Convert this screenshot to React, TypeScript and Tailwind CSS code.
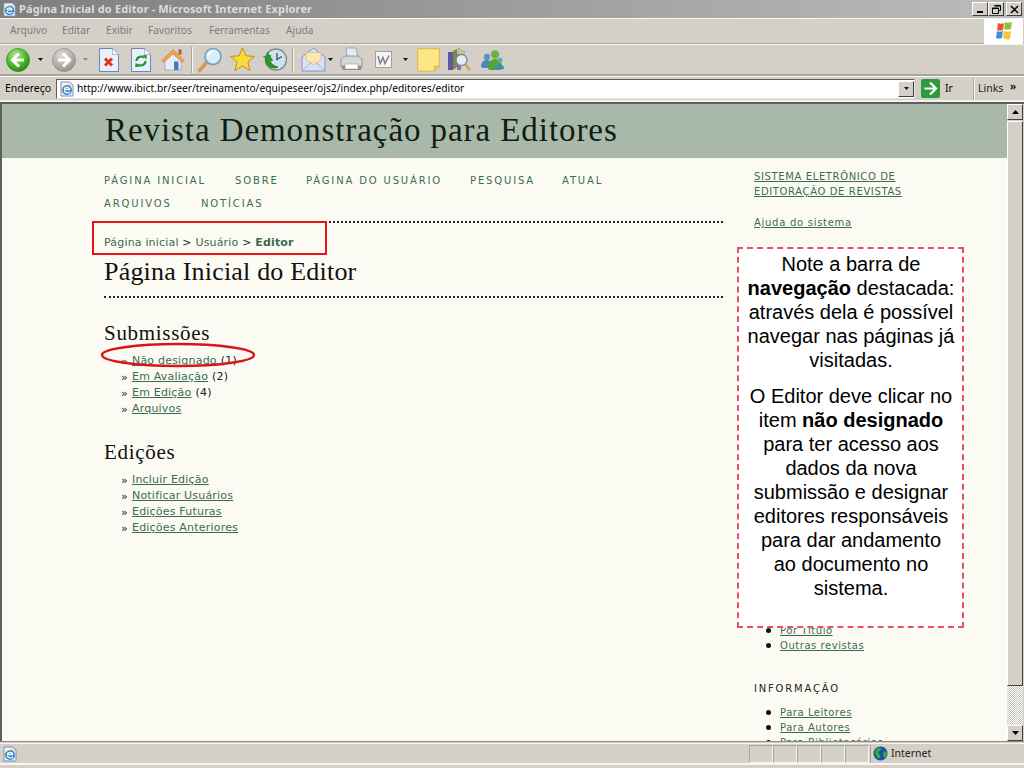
import React from "react";

const ui = "font-['Noto_Sans','Liberation_Sans',sans-serif]";
const page = "font-['DejaVu_Sans','Liberation_Sans',sans-serif]";
const serif = "font-['Liberation_Serif','DejaVu_Serif',serif]";

function Ie({ className }: { className: string }) {
  return (
    <svg viewBox="0 0 16 16" className={className}>
      <path d="M2 1h9l3 3v11H2z" fill="#eef3fb" stroke="#7d8fb5" />
      <circle cx="8" cy="9" r="5" fill="#2f86d8" />
      <path d="M5 8.5h6.2M5.2 9.6c.3 2.3 3.6 3 5.6 1.2M5.2 8.4c.3-2.4 4.7-3 5.8 0" fill="none" stroke="#fff" strokeWidth="1.3" />
      <path d="M2 12C1 6 7 3 13 4" fill="none" stroke="#f0b93c" strokeWidth=".8" />
    </svg>
  );
}

function Tri() {
  return <svg viewBox="0 0 5 3" className="w-[5px] h-[3px] shrink-0"><path d="M0 0h5L2.5 3z" fill="#111" /></svg>;
}

function Round({ grey, dir, className }: { grey?: boolean; dir: "l" | "r"; className: string }) {
  const id = grey ? "rg" : "rgn";
  return (
    <svg viewBox="0 0 24 24" className={className}>
      <defs>
        <radialGradient id={id} cx=".4" cy=".3" r=".8">
          <stop offset="0" stopColor={grey ? "#dedcd6" : "#b6ee8a"} />
          <stop offset=".55" stopColor={grey ? "#b3b1ab" : "#4cb82c"} />
          <stop offset="1" stopColor={grey ? "#8b8985" : "#1c7a14"} />
        </radialGradient>
      </defs>
      <circle cx="12" cy="12" r="11.5" fill={`url(#${id})`} stroke={grey ? "#8f8d88" : "#2a8a1e"} strokeWidth=".7" />
      <path d={dir === "l" ? "M13 5.5 6.5 12l6.5 6.5M7 12h11" : "M11 5.5l6.5 6.5-6.5 6.5M17 12H6"} fill="none" stroke="#fff" strokeWidth="3" />
    </svg>
  );
}

function Doc({ children, className }: { children: React.ReactNode; className: string }) {
  return (
    <svg viewBox="0 0 20 24" className={className}>
      <path d="M.5.5h13l6 6v17H.5z" fill="#eaf0fb" stroke="#6f86bd" />
      <path d="M13.5.5v6h6z" fill="#fff" stroke="#8da0cd" strokeWidth=".7" />
      {children}
    </svg>
  );
}

function Toolbar() {
  return (
    <div className="h-[32px] flex items-center pl-[6px] border-t border-[#f6f5f0] border-b-2 border-b-[#a8a59c]">
      <Round dir="l" className="w-[24px] h-[24px] shrink-0" />
      <div className="ml-[8px]"><Tri /></div>
      <Round grey dir="r" className="ml-[9px] w-[24px] h-[24px] shrink-0" />
      <svg viewBox="0 0 5 3" className="ml-[7px] w-[5px] h-[3px] shrink-0"><path d="M0 0h5L2.5 3z" fill="#8b8985" /></svg>
      <Doc className="ml-[11px] w-[20px] h-[24px] shrink-0">
        <path d="M6 10.5l7 7M13 10.5l-7 7" stroke="#e3321c" strokeWidth="3" />
      </Doc>
      <Doc className="ml-[12px] w-[20px] h-[24px] shrink-0">
        <path d="M5.5 13a4.5 4.5 0 0 1 7.5-3.3M14.5 13a4.5 4.5 0 0 1-7.5 3.3" fill="none" stroke="#23932a" strokeWidth="2.2" />
        <path d="M11.5 7l4.5.3-.8 4.3zM8.5 19l-4.5-.3.8-4.3z" fill="#23932a" />
      </Doc>
      <svg viewBox="0 0 24 24" className="ml-[10px] w-[24px] h-[24px] shrink-0">
        <path d="M4 11v11h16V11L12 4z" fill="#e8eef8" stroke="#8f9fbe" strokeWidth=".7" />
        <path d="M.8 12.5 12 1.5l11.2 11-2 2L12 6 2.8 14.500z" fill="#f0a64a" stroke="#c7762a" strokeWidth=".6" />
        <rect x="17.500" y="1.500" width="3" height="5" fill="#b85c3a" />
        <rect x="13" y="13.500" width="4.500" height="8.500" fill="#4f76bb" />
      </svg>
      <div className="ml-[6px] w-[2px] h-[26px] bg-[#a8a59c] border-r border-r-[#f6f5f0] shrink-0" />
      <svg viewBox="0 0 26 26" className="ml-[4px] w-[26px] h-[26px] shrink-0">
        <path d="M2.500 23.500 10 15" stroke="#d09a55" strokeWidth="3.600" strokeLinecap="round" />
        <circle cx="16" cy="9.500" r="8" fill="#d8eefa" stroke="#6f9fc4" strokeWidth="1.600" />
        <path d="M11 9c.8-3 3-4.500 6-4.500" fill="none" stroke="#fff" strokeWidth="1.600" />
      </svg>
      <svg viewBox="0 0 25 25" className="ml-[7px] w-[25px] h-[25px] shrink-0">
        <path d="M12.500.8l3.500 8 8.400.6-6.500 5.600 2.200 8.500-7.600-4.600-7.600 4.600 2.200-8.500L.6 9.400 9 8.800z" fill="#fbd93e" stroke="#c08c1c" />
      </svg>
      <svg viewBox="0 0 25 25" className="ml-[7px] w-[25px] h-[25px] shrink-0">
        <circle cx="14" cy="12.500" r="10.500" fill="#cfe3ef" stroke="#7f8f96" strokeWidth="1.400" />
        <path d="M15 6v6.500l5-3" fill="none" stroke="#3d5a6a" strokeWidth="1.400" />
        <path d="M6.500 6c-4 4-4 10 .5 13.500 3 2 6.500 2 9 .5-4-1-7-3-8-6l2.500-.5-5-8z" fill="#2c9a2a" stroke="#1d7a20" strokeWidth=".8" />
        <path d="M.5 9.500 7 13.500 9.500 8z" fill="#2c9a2a" />
      </svg>
      <div className="ml-[5px] w-[2px] h-[26px] bg-[#a8a59c] border-r border-r-[#f6f5f0] shrink-0" />
      <svg viewBox="0 0 25 25" className="ml-[7px] w-[25px] h-[25px] shrink-0">
        <path d="M1 10 12.500 1 24 10v14H1z" fill="#d7e2f6" stroke="#7f95c6" />
        <path d="M5 13V5.500h15V13l-7.500 5z" fill="#fbe6ae" stroke="#d7b878" strokeWidth=".7" />
        <path d="M1 24l9.500-9M24 24l-9.500-9" stroke="#9fb2da" strokeWidth="1" />
      </svg>
      <div className="ml-[2px]"><Tri /></div>
      <svg viewBox="0 0 23 25" className="ml-[7px] w-[23px] h-[25px] shrink-0">
        <path d="M6 1h10l2 9H7z" fill="#e3eaf5" stroke="#8e9cb4" strokeWidth=".8" />
        <path d="M1 12l4-3h13l4 3v7H1z" fill="#d8d8d8" stroke="#84847f" strokeWidth=".8" />
        <path d="M1 19h21l-1 4H3z" fill="#8d8d8a" />
        <rect x="5" y="17" width="13" height="5" fill="#fff" stroke="#9a9a95" strokeWidth=".6" />
      </svg>
      <svg viewBox="0 0 17 17" className="ml-[12px] w-[17px] h-[17px] shrink-0">
        <rect x=".5" y=".5" width="16" height="16" fill="#f5f5f0" stroke="#a1a19b" />
        <path d="M3 5l2.200 7.500L8 6.500l2 6L14 4.500" fill="none" stroke="#7a7f94" strokeWidth="1.500" />
      </svg>
      <div className="ml-[11px]"><Tri /></div>
      <svg viewBox="0 0 23 24" className="ml-[9px] w-[23px] h-[24px] shrink-0">
        <path d="M.7.7h21.600v17.500l-5 5H.7z" fill="#fce784" stroke="#e0b34c" />
        <path d="M22.300 18.200h-5v5z" fill="#f2cd58" stroke="#c99c35" strokeWidth=".6" />
      </svg>
      <svg viewBox="0 0 24 25" className="ml-[7px] w-[24px] h-[25px] shrink-0">
        <path d="M1 5h5v18H1z" fill="#5d57a8" />
        <path d="M6 4l4-2v18l-4 3z" fill="#7f8a3d" />
        <path d="M11 1l7 4-3 5-4-1z" fill="#cfc69e" stroke="#8e8a6f" strokeWidth=".5" />
        <path d="M10 7h4v16h-4z" fill="#8e6fae" />
        <circle cx="14.500" cy="13" r="5.500" fill="#e3eef0" stroke="#77909a" strokeWidth="1.400" />
        <path d="M18.500 17.500 23 23" stroke="#c9a35c" strokeWidth="2.600" />
      </svg>
      <svg viewBox="0 0 25 22" className="ml-[9px] w-[25px] h-[22px] shrink-0">
        <circle cx="7" cy="8" r="3.200" fill="#5b94c4" />
        <path d="M1 18c0-5 2.500-7 6-7 2 0 3 1 4 2l-2 6H3z" fill="#4d86b8" />
        <circle cx="15" cy="5.500" r="4.200" fill="#6eb04c" />
        <path d="M8 20c0-7 3-10 7-10s7 3 7 8c0 2-1 3-3 3H10z" fill="#57a03c" />
        <circle cx="20" cy="11" r="2.500" fill="#60a8cc" />
        <path d="M15 21c1-4 3-6 5-6s4 2 4 5z" fill="#3f8fb4" />
      </svg>
    </div>
  );
}

function WinBtn({ children }: { children: React.ReactNode }) {
  return (
    <div className="w-[16px] h-[14px] bg-[#d4d0c8] border border-t-white border-l-white border-r-[#404040] border-b-[#404040] flex items-center justify-center shrink-0">
      {children}
    </div>
  );
}

const navText = "text-[10px] leading-[23px] tracking-[1.85px] text-[#3b6b50] whitespace-nowrap shrink-0";

function Li({ label, n }: { label: string; n?: number }) {
  return (
    <li className="flex items-center h-[16px] pl-[17px] text-[11px] text-[#222]">
      <span className="w-[11px] text-[11px] leading-none">»</span>
      <a className="underline text-[#3b6b50] tracking-[.2px]">{label}</a>
      {n !== undefined && <span className="ml-[4px] tracking-[.2px]">({n})</span>}
    </li>
  );
}

function Side({ label }: { label: string }) {
  return (
    <li className="flex items-center h-[15px] pl-[12px] text-[10px]">
      <span className="w-[5px] h-[5px] rounded-full bg-[#111] mr-[9px]" />
      <a className="underline text-[#3b6b50] tracking-[.55px] whitespace-nowrap">{label}</a>
    </li>
  );
}

export default function App() {
  return (
    <div className={`relative w-[1024px] h-[768px] overflow-hidden flex flex-col bg-[#d4d0c8] ${ui}`}>
      <div className="h-[18px] shrink-0 flex items-center bg-gradient-to-r from-[#7f7f7f] to-[#bcbcbc] pl-[2px] pr-[2px]">
        <Ie className="w-[15px] h-[15px] shrink-0" />
        <span className="ml-[2px] text-[11px] font-bold tracking-[.14px] text-[#dcdcdc] whitespace-nowrap">Página Inicial do Editor - Microsoft Internet Explorer</span>
        <div className="ml-auto flex">
          <WinBtn><span className="w-[6px] h-[2px] bg-black mt-[6px]" /></WinBtn>
          <WinBtn>
            <svg viewBox="0 0 9 9" className="w-[9px] h-[9px]"><path d="M2.500.5h6v5h-2M.5 3h6v5.500h-6z" fill="none" stroke="#000" /><path d="M2.500 1h6M.5 3.500h6" stroke="#000" /></svg>
          </WinBtn>
          <div className="ml-[2px]">
            <WinBtn>
              <svg viewBox="0 0 9 9" className="w-[9px] h-[9px]"><path d="M1 1l7 7M8 1 1 8" stroke="#000" strokeWidth="1.500" /></svg>
            </WinBtn>
          </div>
        </div>
      </div>

      <div className="h-[26px] shrink-0 flex items-center text-[10.2px] text-[#7b7b7b] border-t border-[#f6f5f0] border-b border-b-[#a8a59c] relative">
        <span className="ml-[10px] w-[52px] shrink-0">Arquivo</span>
        <span className="w-[44px] shrink-0">Editar</span>
        <span className="w-[42px] shrink-0">Exibir</span>
        <span className="w-[61px] shrink-0">Favoritos</span>
        <span className="w-[77px] shrink-0">Ferramentas</span>
        <span>Ajuda</span>
        <div className="ml-auto mr-[1px] w-[39px] h-[25px] bg-white flex items-center justify-center shrink-0">
          <svg viewBox="0 0 20 20" className="w-[20px] h-[20px]">
            <path d="M4 2c2 1 4 1 6 0L9 9C7 10 5 10 3 9z" fill="#e8572c" />
            <path d="M11 1c2 1 5 1 7 0l-1 7c-2 1-5 1-7 0z" fill="#8cc43c" />
            <path d="M3 10c2 1 4 1 6 0l-1 7c-2 1-4 1-6 0z" fill="#3f8fdc" />
            <path d="M10 10c2 1 5 1 7 0l-1 8c-2 1-5 0-7-1z" fill="#f8c23a" />
          </svg>
        </div>
      </div>

      <Toolbar />

      <div className="h-[24px] shrink-0 flex items-center border-t border-[#f6f5f0] relative">
        <span className="ml-[5px] w-[51px] shrink-0 text-[10.5px] text-black">Endereço</span>
        <div className="w-[859px] h-[20px] bg-white border border-[#5c5c5c] border-b-[#e8e6e0] border-r-[#e8e6e0] flex items-center shrink-0">
          <Ie className="ml-[2px] w-[16px] h-[16px] shrink-0" />
          <span className="ml-[2px] text-[10.25px] text-black whitespace-nowrap">http://www.ibict.br/seer/treinamento/equipeseer/ojs2/index.php/editores/editor</span>
          <div className="ml-auto w-[16px] h-[16px] bg-[#d4d0c8] border border-t-white border-l-white border-r-[#404040] border-b-[#404040] flex items-center justify-center shrink-0"><Tri /></div>
        </div>
        <svg viewBox="0 0 19 19" className="ml-[6px] w-[19px] h-[19px] shrink-0">
          <rect width="19" height="19" rx="2" fill="#2f9a3c" />
          <path d="M9 3.500l6 6-6 6M14 9.500H3.500" fill="none" stroke="#fff" strokeWidth="2.200" />
        </svg>
        <span className="ml-[5px] w-[28px] shrink-0 text-[10.5px]">Ir</span>
        <div className="w-[2px] h-[22px] bg-[#a8a59c] border-r border-r-[#f6f5f0] shrink-0" />
        <span className="ml-[3px] w-[24px] text-[10.5px] text-center text-[#222]">Links</span>
        <span className="ml-[8px] text-[10px] leading-none -mt-[6px] font-bold text-[#222]">»</span>
      </div>

      <div className="flex-1 min-h-0 flex border-t-2 border-t-[#f2f1ec]">
        <div className={`relative flex-1 min-w-0 overflow-hidden bg-[#fbfbf3] border-l-2 border-t-2 border-[#5f5f5c] flex flex-col ${page}`}>
          <div className="h-[54px] shrink-0 bg-[#a9b9a9] pl-[103px] flex items-center">
            <h1 className={`${serif} text-[33px] tracking-[.93px] text-[#111c14] whitespace-nowrap`}>Revista Demonstração para Editores</h1>
          </div>
          <div className="flex pl-[102px]">
            <div className="w-[619px] shrink-0">
              <div className="pt-[11px] h-[63px]">
                <div className="flex">
                  <span className={`${navText} w-[131px]`}>PÁGINA INICIAL</span>
                  <span className={`${navText} w-[71px]`}>SOBRE</span>
                  <span className={`${navText} w-[164px]`}>PÁGINA DO USUÁRIO</span>
                  <span className={`${navText} w-[92px]`}>PESQUISA</span>
                  <span className={navText}>ATUAL</span>
                </div>
                <div className="flex">
                  <span className={`${navText} w-[97px]`}>ARQUIVOS</span>
                  <span className={navText}>NOTÍCIAS</span>
                </div>
              </div>
              <div className="border-t-2 border-dotted border-[#222]" />
              <div className="mt-[13px] text-[11px] leading-[14px] text-[#3b6b50] tracking-[.18px] whitespace-nowrap">
                Página inicial <span className="text-[#222]">&gt;</span> Usuário <span className="text-[#222]">&gt;</span> <b>Editor</b>
              </div>
              <h2 className={`${serif} mt-[5px] text-[26px] leading-[34px] tracking-[.2px] text-[#111]`}>Página Inicial do Editor</h2>
              <div className="mt-[7px] border-t-2 border-dotted border-[#222]" />
              <h3 className={`${serif} mt-[22px] text-[21px] leading-[26px] tracking-[.7px] text-[#111]`}>Submissões</h3>
              <ul className="mt-[7px]">
                <Li label="Não designado" n={1} />
                <Li label="Em Avaliação" n={2} />
                <Li label="Em Edição" n={4} />
                <Li label="Arquivos" />
              </ul>
              <h3 className={`${serif} mt-[22px] text-[21px] leading-[26px] tracking-[.7px] text-[#111]`}>Edições</h3>
              <ul className="mt-[7px]">
                <Li label="Incluir Edição" />
                <Li label="Notificar Usuários" />
                <Li label="Edições Futuras" />
                <Li label="Edições Anteriores" />
              </ul>
            </div>
            <div className="ml-[31px] flex-1 min-w-0">
              <div className="pt-[11px] text-[10px] leading-[15px] tracking-[.63px] text-[#3b6b50] whitespace-nowrap">
                <a className="underline">SISTEMA ELETRÔNICO DE</a>
                <br />
                <a className="underline">EDITORAÇÃO DE REVISTAS</a>
              </div>
              <a className="block mt-[16px] text-[10px] leading-[15px] tracking-[.72px] underline text-[#3b6b50]">Ajuda do sistema</a>
              <ul className="mt-[393px]">
                <Side label="Por Título" />
                <Side label="Outras revistas" />
              </ul>
              <div className="mt-[28px] text-[10px] leading-[15px] tracking-[1.8px] text-[#222]">INFORMAÇÃO</div>
              <ul className="mt-[9px]">
                <Side label="Para Leitores" />
                <Side label="Para Autores" />
                <Side label="Para Bibliotecários" />
              </ul>
            </div>
          </div>

          <div className="absolute left-[90px] top-[117px] w-[235px] h-[34px] border-2 border-[#e8141c]" />
          <svg viewBox="0 0 156 26" className="absolute left-[98px] top-[238px] w-[156px] h-[26px]">
            <ellipse cx="78" cy="13" rx="76" ry="11" fill="none" stroke="#d9141c" strokeWidth="2.400" />
          </svg>
          <div className="absolute left-[735px] top-[143px] w-[227px] h-[381px] bg-white border-2 border-dashed border-[#e8506a] pl-[1px] pt-[3px] text-center text-[20px] leading-[24px] text-black font-['Liberation_Sans',sans-serif] whitespace-nowrap">
            <p>Note a barra de<br /><b>navegação</b> destacada:<br />através dela é possível<br />navegar nas páginas já<br />visitadas.</p>
            <p className="mt-[12px]">O Editor deve clicar no<br />item <b>não designado</b><br />para ter acesso aos<br />dados da nova<br />submissão e designar<br />editores responsáveis<br />para dar andamento<br />ao documento no<br />sistema.</p>
          </div>
        </div>

        <div className="w-[17px] shrink-0 bg-[#d4d0c8] flex flex-col border-t-2 border-t-[#5f5f5c]">
          <div className="w-[16px] h-[16px] border border-t-white border-l-white border-r-[#404040] border-b-[#404040] flex items-center justify-center shrink-0">
            <svg viewBox="0 0 7 4" className="w-[7px] h-[4px]"><path d="M0 4h7L3.500 0z" fill="#000" /></svg>
          </div>
          <div className="mt-[1px] w-[16px] h-[565px] border border-t-white border-l-white border-r-[#404040] border-b-[#404040] bg-[#d4d0c8] shrink-0" />
          <div className="w-[16px] flex-1 bg-[repeating-conic-gradient(#fff_0%_25%,#c8c5bd_0%_50%)] bg-[length:2px_2px]" />
          <div className="w-[16px] h-[16px] border border-t-white border-l-white border-r-[#404040] border-b-[#404040] flex items-center justify-center shrink-0">
            <svg viewBox="0 0 7 4" className="w-[7px] h-[4px]"><path d="M0 0h7L3.500 4z" fill="#000" /></svg>
          </div>
        </div>
      </div>

      <div className="h-[27px] shrink-0 flex flex-col">
        <div className="h-[3px] border-t border-[#8f8c84] border-b border-b-[#f6f5f0]" />
        <div className="h-[19px] flex items-center border-b-2 border-b-[#f6f5f0] box-content">
          <Ie className="ml-[2px] w-[16px] h-[16px] shrink-0" />
          <div className="ml-auto flex items-center h-[19px]">
            {[0, 1, 2, 3, 4].map((i) => (
              <div key={i} className="w-[24px] h-[18px] border border-[#a8a59c] border-r-[#f6f5f0] border-b-[#f6f5f0]" />
            ))}
            <div className="w-[154px] flex items-center pl-[2px] border-l border-[#a8a59c] h-[18px] ml-[1px]">
              <svg viewBox="0 0 16 16" className="w-[15px] h-[15px] shrink-0">
                <circle cx="8" cy="8" r="7.500" fill="#1a4fa8" />
                <path d="M3 4c2-2 5-3 6-1 0 2-3 2-3 4 0 2 2 2 2 4-1 2-2 3-3 2-1-2-2-3-3-5zM11 6c2-1 3 0 4 2 0 2-1 4-3 5-1-2-2-5-1-7z" fill="#3aa83a" />
              </svg>
              <span className="ml-[3px] text-[10.5px] text-[#222]">Internet</span>
            </div>
          </div>
        </div>
      </div>
    </div>
  );
}
